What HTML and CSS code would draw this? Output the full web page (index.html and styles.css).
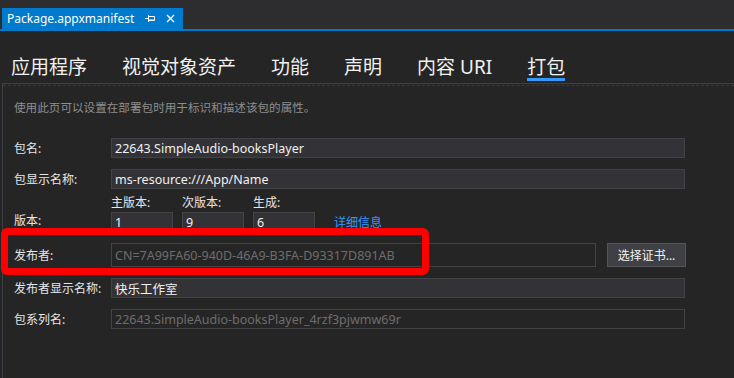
FILE: index.html
```html
<!DOCTYPE html>
<html lang="zh-CN">
<head>
    <meta charset="UTF-8">
    <title>Package.appxmanifest</title>
    <link rel="stylesheet" href="styles.css">
</head>
<body>
    <div class="tabstrip">
        <div class="doctab">
            <span class="doctab-name">Package.appxmanifest</span>
            <svg class="pin" width="11" height="9" viewBox="0 0 11 9">
                <path d="M0 4.5H3.5M3.5 1V8M3.5 2.5H9.5V6.5H3.5M3.5 6H9.5" stroke="#fff" stroke-width="1" fill="none"/>
            </svg>
            <svg class="close" width="9" height="9" viewBox="0 0 9 9">
                <path d="M1 1L8 8M8 1L1 8" stroke="#fff" stroke-width="1.4"/>
            </svg>
        </div>
    </div>
    <div class="tabline"></div>

    <div class="editor">
        <ul class="nav">
            <li>应用程序</li>
            <li>视觉对象资产</li>
            <li>功能</li>
            <li>声明</li>
            <li>内容 URI</li>
            <li class="on">打包</li>
        </ul>

        <div class="panel">
            <div class="rule"></div>
            <p class="desc">使用此页可以设置在部署包时用于标识和描述该包的属性。</p>

            <div class="row first">
                <label>包名:</label>
                <input class="field" type="text" value="22643.SimpleAudio-booksPlayer" readonly>
            </div>

            <div class="row">
                <label>包显示名称:</label>
                <input class="field" type="text" value="ms-resource:///App/Name" readonly>
            </div>

            <div class="row version">
                <label>版本:</label>
                <div class="ver-parts">
                    <div class="ver">
                        <span>主版本:</span>
                        <input class="field small" type="text" value="1" readonly>
                    </div>
                    <div class="ver">
                        <span>次版本:</span>
                        <input class="field small" type="text" value="9" readonly>
                    </div>
                    <div class="ver">
                        <span>生成:</span>
                        <input class="field small" type="text" value="6" readonly>
                    </div>
                    <a class="more" href="#">详细信息</a>
                </div>
            </div>

            <div class="row publisher">
                <label>发布者:</label>
                <input class="field off" type="text" value="CN=7A99FA60-940D-46A9-B3FA-D93317D891AB" readonly>
                <button class="btn">选择证书...</button>
                <div class="highlight"></div>
            </div>

            <div class="row">
                <label>发布者显示名称:</label>
                <input class="field" type="text" value="快乐工作室" readonly>
            </div>

            <div class="row">
                <label>包系列名:</label>
                <input class="field off" type="text" value="22643.SimpleAudio-booksPlayer_4rzf3pjwmw69r" readonly>
            </div>
        </div><!-- panel -->
    </div><!-- editor -->
</body>
</html>
```

FILE: styles.css
```css
*{margin: 0;padding: 0;box-sizing: border-box;}
html, body{
    width: 100%;
    height: 100%;
}

body{
    background: #252526;
    color: #f1f1f1;
    font-family: "Noto Sans", "Noto Sans CJK SC", sans-serif;
    font-size: 12px;
    overflow: hidden;
}

ul, li{
    list-style: none;
}

/* document tab */
.tabstrip{
    height: 29px;
    padding: 8px 0 0 2px;
    background: #2d2d30;
}

.doctab{
    width: 181px;
    height: 21px;
    background: #007acc;
    display: flex;
    align-items: center;
    padding-left: 5px;
    color: #fff;
    line-height: 16px;
}

.doctab-name{
    flex: 1;
}

.pin{
    margin-right: 10px;
}

.close{
    margin-right: 8px;
}

.tabline{
    height: 2px;
    background: #007acc;
}

/* page tabs */
.nav{
    height: 52px;
    display: flex;
    align-items: flex-end;
    gap: 35px;
    padding-left: 11px;
}

.nav li{
    font-size: 19px;
    line-height: 22px;
    color: #f1f1f1;
    border-bottom: 3px solid transparent;
    margin-bottom: 2px;
}

.nav li.on{
    border-bottom-color: #3399ff;
}

/* form panel */
.panel{
    margin-left: 2px;
    height: 300px;
    border-top: 1px solid #3f3f46;
    border-left: 1px solid #3f3f46;
    padding-left: 11px;
}

.rule{
    margin: 1px 0 0 -11px;
    border-top: 1px dashed #3a3a3e;
}

.desc{
    margin-top: 14px;
    font-size: 11.6px;
    line-height: 16px;
    color: #8e8e8e;
}

.row{
    display: flex;
    align-items: center;
    margin-top: 11px;
    position: relative;
}

.row.first{
    margin-top: 22px;
}

.row label{
    width: 97px;
    flex-shrink: 0;
    color: #e6e6e6;
}

.field{
    width: 574px;
    height: 20px;
    background: #333337;
    border: 1px solid #434346;
    color: #f1f1f1;
    font: inherit;
    font-size: 12.5px;
    padding: 0 3px;
    outline: none;
}

.field.off{
    background: #252526;
    color: #6d6d6d;
}

/* version */
.row.version{
    margin-top: 6px;
    align-items: flex-end;
}

.row.version label{
    padding-bottom: 3px;
}

.ver-parts{
    display: flex;
    align-items: flex-end;
    gap: 9px;
}

.ver{
    display: flex;
    flex-direction: column;
    gap: 1px;
}

.ver span{
    line-height: 16px;
    color: #e6e6e6;
}

.field.small{
    width: 62px;
}

.more{
    margin-left: 10px;
    color: #3399ff;
    text-decoration: none;
    line-height: 16px;
    padding-bottom: 1px;
}

/* publisher */
.row.publisher .field{
    width: 485px;
    height: 24px;
}

.btn{
    margin-left: 11px;
    width: 79px;
    height: 24px;
    background: #3f3f46;
    border: 1px solid #555558;
    color: #f1f1f1;
    font: inherit;
}

.highlight{
    position: absolute;
    left: -13px;
    top: -15px;
    width: 428px;
    height: 47px;
    border: 7px solid #ff0000;
    border-radius: 6px;
}
```
